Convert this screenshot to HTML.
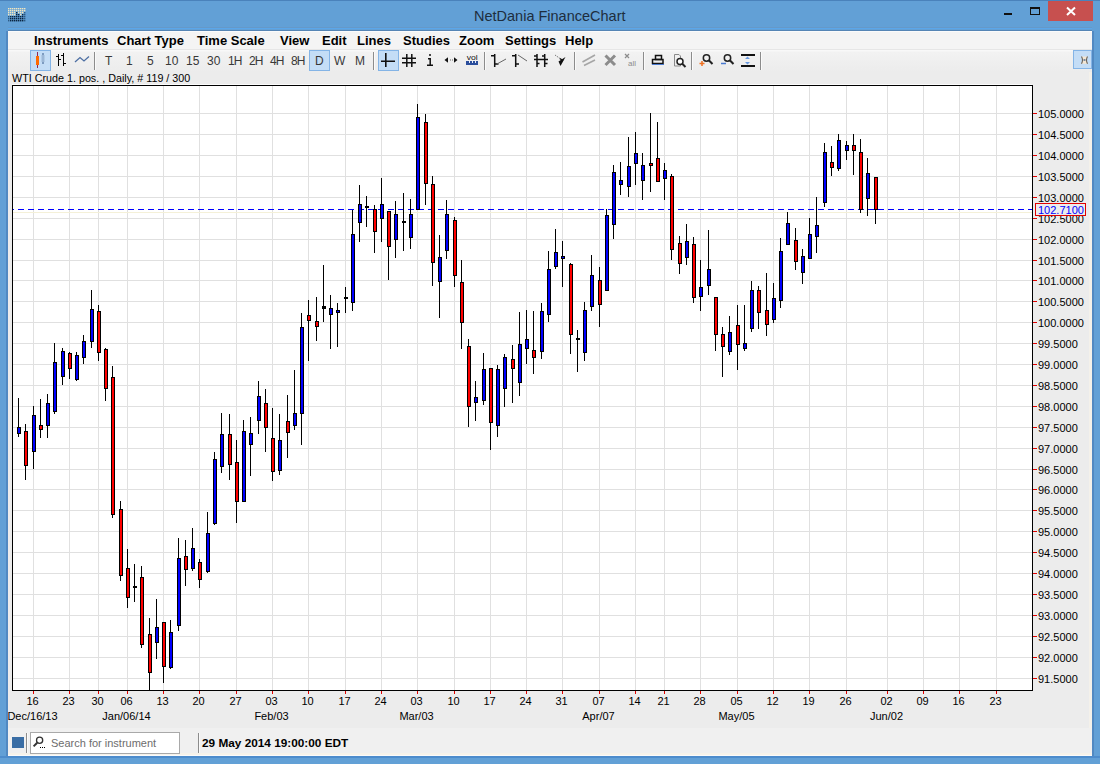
<!DOCTYPE html>
<html><head><meta charset="utf-8">
<style>
*{margin:0;padding:0;box-sizing:border-box}
html,body{width:1100px;height:764px;overflow:hidden;background:#62a0d6;font-family:"Liberation Sans",sans-serif}
.abs{position:absolute}
#client{position:absolute;left:8px;top:31px;width:1084px;height:725px;background:#ececec}
#menubar{position:absolute;left:8px;top:31px;width:1084px;height:19px;background:#f4f4f4;border-top:1px solid #fbfbfb;border-bottom:1px solid #e6e6e6}
.menu{position:absolute;top:33px;font-weight:bold;font-size:13px;color:#000;line-height:16px;white-space:nowrap}
.tb{position:absolute;top:54px;font-size:12px;color:#383838;line-height:14px;white-space:nowrap}
.sel{position:absolute;background:#c4ddf6;border:1px solid #84b4e6}
.sep{position:absolute;width:1px;background:#8c8c8c;box-shadow:1px 0 0 #fafafa}
svg text{font-family:"Liberation Sans",sans-serif}
.ax{font-size:11px;fill:#000}
</style></head><body>
<div id="client"></div>
<div id="menubar"></div>
<div class="abs" style="left:1089px;top:72px;width:3px;height:684px;background:#f4f1ea"></div>
<div class="abs" style="left:0;top:0;width:1100px;height:1px;background:#4a82bb"></div>
<div class="abs" style="left:8px;top:27px;width:1084px;height:1px;background:#6699c8"></div>
<div class="abs" style="left:8px;top:28px;width:1084px;height:1px;background:#5ba6e9"></div>
<div class="abs" style="left:8px;top:30px;width:1084px;height:1px;background:#5585b5"></div>
<div class="abs" style="left:8px;top:50px;width:1084px;height:22px;background:linear-gradient(#f8f8f8 0px,#f8f8f8 1px,#f2f2f2 2px,#ececec 22px)"></div>
<!-- title bar -->
<div class="abs" style="left:474px;top:8px;font-size:14.5px;color:#1e2e3e;white-space:nowrap;line-height:16px">NetDania FinanceChart</div>
<!-- window icon -->
<svg class="abs" style="left:0;top:0" width="40" height="30"><rect x="8" y="8" width="1.4" height="1.4" fill="#f2e6c0"/><rect x="10" y="8" width="1.4" height="1.4" fill="#f2e6c0"/><rect x="12" y="8" width="1.4" height="1.4" fill="#f2e6c0"/><rect x="14" y="8" width="1.4" height="1.4" fill="#f2e6c0"/><rect x="16" y="8" width="1.4" height="1.4" fill="#f2e6c0"/><rect x="18" y="8" width="1.4" height="1.4" fill="#f2e6c0"/><rect x="20" y="8" width="1.4" height="1.4" fill="#f2e6c0"/><rect x="22" y="8" width="1.4" height="1.4" fill="#f2e6c0"/><rect x="24" y="8" width="1.4" height="1.4" fill="#f2e6c0"/><rect x="8" y="10" width="1.4" height="1.4" fill="#f2e6c0"/><rect x="10" y="10" width="1.4" height="1.4" fill="#f2e6c0"/><rect x="12" y="10" width="1.4" height="1.4" fill="#f2e6c0"/><rect x="14" y="10" width="1.4" height="1.4" fill="#f2e6c0"/><rect x="16" y="10" width="1.4" height="1.4" fill="#f2e6c0"/><rect x="18" y="10" width="1.4" height="1.4" fill="#f2e6c0"/><rect x="20" y="10" width="1.4" height="1.4" fill="#f2e6c0"/><rect x="22" y="10" width="1.4" height="1.4" fill="#f2e6c0"/><rect x="24" y="10" width="1.4" height="1.4" fill="#f2e6c0"/><rect x="8" y="12" width="1.4" height="1.4" fill="#f2e6c0"/><rect x="10" y="12" width="1.4" height="1.4" fill="#f2e6c0"/><rect x="12" y="12" width="1.4" height="1.4" fill="#f2e6c0"/><rect x="14" y="12" width="1.4" height="1.4" fill="#f2e6c0"/><rect x="16" y="12" width="1.4" height="1.4" fill="#0b2440"/><rect x="18" y="12" width="1.4" height="1.4" fill="#f2e6c0"/><rect x="20" y="12" width="1.4" height="1.4" fill="#f2e6c0"/><rect x="22" y="12" width="1.4" height="1.4" fill="#f2e6c0"/><rect x="24" y="12" width="1.4" height="1.4" fill="#2d5a84"/><rect x="8" y="14" width="1.4" height="1.4" fill="#f2e6c0"/><rect x="10" y="14" width="1.4" height="1.4" fill="#f2e6c0"/><rect x="12" y="14" width="1.4" height="1.4" fill="#f2e6c0"/><rect x="14" y="14" width="1.4" height="1.4" fill="#f2e6c0"/><rect x="16" y="14" width="1.4" height="1.4" fill="#0b2440"/><rect x="18" y="14" width="1.4" height="1.4" fill="#0b2440"/><rect x="20" y="14" width="1.4" height="1.4" fill="#f2e6c0"/><rect x="22" y="14" width="1.4" height="1.4" fill="#0b2440"/><rect x="24" y="14" width="1.4" height="1.4" fill="#2d5a84"/><rect x="8" y="16" width="1.4" height="1.4" fill="#2d5a84"/><rect x="10" y="16" width="1.4" height="1.4" fill="#0b2440"/><rect x="12" y="16" width="1.4" height="1.4" fill="#0b2440"/><rect x="14" y="16" width="1.4" height="1.4" fill="#0b2440"/><rect x="16" y="16" width="1.4" height="1.4" fill="#0b2440"/><rect x="18" y="16" width="1.4" height="1.4" fill="#0b2440"/><rect x="20" y="16" width="1.4" height="1.4" fill="#0b2440"/><rect x="22" y="16" width="1.4" height="1.4" fill="#0b2440"/><rect x="24" y="16" width="1.4" height="1.4" fill="#2d5a84"/><rect x="8" y="18" width="1.4" height="1.4" fill="#2d5a84"/><rect x="10" y="18" width="1.4" height="1.4" fill="#0b2440"/><rect x="12" y="18" width="1.4" height="1.4" fill="#0b2440"/><rect x="14" y="18" width="1.4" height="1.4" fill="#0b2440"/><rect x="16" y="18" width="1.4" height="1.4" fill="#0b2440"/><rect x="18" y="18" width="1.4" height="1.4" fill="#0b2440"/><rect x="20" y="18" width="1.4" height="1.4" fill="#0b2440"/><rect x="22" y="18" width="1.4" height="1.4" fill="#0b2440"/><rect x="24" y="18" width="1.4" height="1.4" fill="#2d5a84"/><rect x="8" y="20" width="1.4" height="1.4" fill="#2d5a84"/><rect x="10" y="20" width="1.4" height="1.4" fill="#0b2440"/><rect x="12" y="20" width="1.4" height="1.4" fill="#0b2440"/><rect x="14" y="20" width="1.4" height="1.4" fill="#0b2440"/><rect x="16" y="20" width="1.4" height="1.4" fill="#0b2440"/><rect x="18" y="20" width="1.4" height="1.4" fill="#0b2440"/><rect x="20" y="20" width="1.4" height="1.4" fill="#0b2440"/><rect x="22" y="20" width="1.4" height="1.4" fill="#0b2440"/><rect x="24" y="20" width="1.4" height="1.4" fill="#2d5a84"/></svg>
<!-- window buttons -->
<div class="abs" style="left:1004px;top:13px;width:8px;height:2px;background:#111"></div>
<div class="abs" style="left:1030px;top:7px;width:10px;height:8px;border:1px solid #111;border-top-width:2px"></div>
<div class="abs" style="left:1048px;top:1px;width:45px;height:20px;background:#c7504f"></div>
<svg class="abs" style="left:1060px;top:0px" width="24" height="24" viewBox="0 0 24 24"><path d="M7 7.5L15 15M15 7.5L7 15" stroke="#fff" stroke-width="2"/></svg>

<!-- menu -->
<div class="menu" style="left:34px">Instruments</div>
<div class="menu" style="left:117px">Chart Type</div>
<div class="menu" style="left:197px">Time Scale</div>
<div class="menu" style="left:280px">View</div>
<div class="menu" style="left:322px">Edit</div>
<div class="menu" style="left:357px">Lines</div>
<div class="menu" style="left:403px">Studies</div>
<div class="menu" style="left:459px">Zoom</div>
<div class="menu" style="left:505px">Settings</div>
<div class="menu" style="left:565px">Help</div>

<!-- toolbar -->
<div class="sel" style="left:30px;top:50px;width:21px;height:21px"></div>
<div class="sel" style="left:309px;top:50px;width:21px;height:21px"></div>
<div class="sel" style="left:378px;top:50px;width:21px;height:21px"></div>
<div class="sel" style="left:1073px;top:50px;width:19px;height:19px"></div>
<div class="sep" style="left:94px;top:52px;height:18px"></div>
<div class="sep" style="left:373px;top:52px;height:18px"></div>
<div class="sep" style="left:484px;top:52px;height:18px"></div>
<div class="sep" style="left:574px;top:52px;height:18px"></div>
<div class="sep" style="left:643px;top:52px;height:18px"></div>
<div class="sep" style="left:691px;top:52px;height:18px"></div>
<div class="sep" style="left:760px;top:52px;height:18px"></div>

<div class="tb" style="left:105px">T</div>
<div class="tb" style="left:126px">1</div>
<div class="tb" style="left:147px">5</div>
<div class="tb" style="left:165px">10</div>
<div class="tb" style="left:186px">15</div>
<div class="tb" style="left:207px">30</div>
<div class="tb" style="left:228px;letter-spacing:-1px">1H</div>
<div class="tb" style="left:249px;letter-spacing:-1px">2H</div>
<div class="tb" style="left:270px;letter-spacing:-1px">4H</div>
<div class="tb" style="left:291px;letter-spacing:-1px">8H</div>
<div class="tb" style="left:315px">D</div>
<div class="tb" style="left:334px">W</div>
<div class="tb" style="left:355px">M</div>

<svg class="abs" style="left:0;top:0" width="1100" height="80" viewBox="0 0 1100 80">
<!-- candle icon -->
<rect x="37" y="52" width="1" height="16" fill="#8a2a5a"/>
<rect x="36" y="56" width="3" height="9" fill="#ff6a00"/>
<rect x="42" y="53" width="2" height="11" fill="#7d9bc0"/>
<rect x="41" y="55" width="4" height="7" fill="#a9c3e0" opacity="0.7"/>
<!-- OHLC icon -->
<g fill="#000" shape-rendering="crispEdges">
<rect x="58" y="54" width="1" height="12"/><rect x="56" y="56" width="2" height="1"/><rect x="59" y="59" width="2" height="1"/>
<rect x="63" y="53" width="1" height="13"/><rect x="61" y="55" width="2" height="1"/><rect x="64" y="63" width="2" height="1"/>
</g>
<!-- line icon -->
<path d="M75 62 L80 57.5 L84 61 L89 56.5" stroke="#4d6fa3" stroke-width="1.3" fill="none"/>
<!-- crosshair -->
<path d="M385.8 53 V67 M381 61.2 H395" stroke="#111" stroke-width="1.6" fill="none"/>
<!-- grid # -->
<path d="M406.8 54 V67 M411.8 54 V67 M402 58.2 H416 M402 62.8 H416" stroke="#111" stroke-width="1.5" fill="none"/>
<!-- i -->
<path d="M430 54 V56 M428 58.8 H430.2 V65 M427 65.2 H433" stroke="#111" stroke-width="1.5" fill="none"/>
<!-- arrows <-> -->
<path d="M444.5 60 L448 57.3 L448 62.7 Z M457.5 60 L454 57.3 L454 62.7 Z" fill="#111"/>
<rect x="450" y="59" width="1" height="2" fill="#aaa"/><rect x="452" y="59" width="1" height="2" fill="#aaa"/>
<!-- vol -->
<text x="466.8" y="59.8" font-size="7.2" fill="#111" font-family="Liberation Sans" textLength="11" lengthAdjust="spacingAndGlyphs">vol</text>
<rect x="466" y="61" width="12" height="4" fill="#2b4e9c"/>
<rect x="469" y="61" width="1" height="2" fill="#e8eef8"/><rect x="472" y="61" width="1" height="2" fill="#e8eef8"/><rect x="475" y="61" width="1" height="2" fill="#e8eef8"/>
<!-- line tools -->
<path d="M494.7 54 V67 M491 55.7 H494.7 M494.7 64 H498.5" stroke="#111" stroke-width="1.5" fill="none"/>
<path d="M497 64 L506 59" stroke="#666" stroke-width="1" fill="none"/>
<path d="M515.7 54 V67 M512 55.7 H515.7 M515.7 64 H519" stroke="#111" stroke-width="1.5" fill="none"/>
<path d="M518 55 L527 61" stroke="#666" stroke-width="1" fill="none"/>
<path d="M537 54 V67 M544.7 54 V67 M534 59.5 H548 M534 56 H537 M537 63.5 H539.5 M542 56 H544.7 M544.7 63.5 H547.5" stroke="#111" stroke-width="1.5" fill="none"/>
<path d="M555 55 L560 58.5" stroke="#777" stroke-width="1" stroke-dasharray="1.5,1" fill="none"/>
<path d="M560 58.5 L563 61" stroke="#111" stroke-width="1.5" fill="none"/>
<path d="M565.5 57 L560.5 66 L558.5 61.5 Z" fill="#111"/>
<!-- gray tools -->
<path d="M582.5 62 L595 55 M584 65.5 L595 60" stroke="#a6a6a6" stroke-width="1.6" fill="none"/>
<path d="M605.5 55.5 L615 65 M615 55.5 L605.5 65" stroke="#8c8c8c" stroke-width="3" fill="none"/>
<path d="M625 54 L629 58 M629 54 L625 58" stroke="#8c8c8c" stroke-width="1.2" fill="none"/>
<text x="628" y="66" font-size="8" fill="#8c8c8c" font-family="Liberation Sans">all</text>
<!-- printer -->
<g fill="none" stroke="#111" stroke-width="1.5">
<rect x="655.5" y="55.5" width="6" height="4"/>
<path d="M652.5 59.5 H663 V63.5 H652.5 Z"/>
</g>
<rect x="652" y="64" width="12" height="1" fill="#4a7ad0"/>
<!-- print preview -->
<path d="M674.5 54.5 H679 L680.5 56 V66 H674.5 Z" fill="none" stroke="#8a8a8a" stroke-width="1"/>
<circle cx="680" cy="61.5" r="3" fill="#fff" stroke="#222" stroke-width="1.5"/>
<path d="M682 63.5 L685.5 67" stroke="#222" stroke-width="2"/>
<!-- zoom in -->
<circle cx="706.5" cy="58" r="3.2" fill="none" stroke="#222" stroke-width="1.5"/>
<path d="M708.8 60.3 L712.5 64" stroke="#222" stroke-width="2"/>
<path d="M702 61 V66 M699.5 63.5 H704.5" stroke="#f07020" stroke-width="1.5"/>
<!-- zoom out -->
<circle cx="727.5" cy="58" r="3.2" fill="none" stroke="#222" stroke-width="1.5"/>
<path d="M729.8 60.3 L733.5 64" stroke="#222" stroke-width="2"/>
<path d="M721 63.5 H726" stroke="#4a7ad0" stroke-width="1.5"/>
<!-- fit -->
<rect x="741" y="54" width="14" height="2" fill="#111"/>
<rect x="741" y="65" width="14" height="2" fill="#111"/>
<path d="M745 59 L747.5 56.5 L750 59 Z M745 62 L747.5 64.5 L750 62 Z" fill="#6a9ae0"/>
<!-- right pin icon -->
<path d="M1081.5 56.5 Q1083.5 60 1081.5 63.8 L1087.5 63.8 Q1085.5 60 1087.5 56.5 Z" fill="#f3e6d3"/>
<path d="M1081.5 56.5 Q1083.5 60 1081.5 63.8 M1087.5 56.5 Q1085.5 60 1087.5 63.8" fill="none" stroke="#6b6257" stroke-width="1.1"/>
<rect x="1083.5" y="59" width="2" height="2" fill="#7a8aa0"/>
</svg>

<!-- chart title -->
<div class="abs" style="left:12px;top:72px;font-size:10.75px;line-height:13px;color:#000;white-space:nowrap">WTI Crude 1. pos. , Daily, # 119 / 300</div>

<svg class="abs" style="left:0;top:0" width="1100" height="764" viewBox="0 0 1100 764" shape-rendering="crispEdges">
<rect x="12" y="84" width="1020" height="1" fill="#fcfcfc"/>
<rect x="12" y="85" width="1020" height="605" fill="#ffffff"/>
<rect x="13" y="113" width="1019" height="1" fill="#e0e0e0"/>
<rect x="13" y="134" width="1019" height="1" fill="#e0e0e0"/>
<rect x="13" y="155" width="1019" height="1" fill="#e0e0e0"/>
<rect x="13" y="176" width="1019" height="1" fill="#e0e0e0"/>
<rect x="13" y="197" width="1019" height="1" fill="#e0e0e0"/>
<rect x="13" y="218" width="1019" height="1" fill="#e0e0e0"/>
<rect x="13" y="239" width="1019" height="1" fill="#e0e0e0"/>
<rect x="13" y="260" width="1019" height="1" fill="#e0e0e0"/>
<rect x="13" y="280" width="1019" height="1" fill="#e0e0e0"/>
<rect x="13" y="301" width="1019" height="1" fill="#e0e0e0"/>
<rect x="13" y="322" width="1019" height="1" fill="#e0e0e0"/>
<rect x="13" y="343" width="1019" height="1" fill="#e0e0e0"/>
<rect x="13" y="364" width="1019" height="1" fill="#e0e0e0"/>
<rect x="13" y="385" width="1019" height="1" fill="#e0e0e0"/>
<rect x="13" y="406" width="1019" height="1" fill="#e0e0e0"/>
<rect x="13" y="427" width="1019" height="1" fill="#e0e0e0"/>
<rect x="13" y="448" width="1019" height="1" fill="#e0e0e0"/>
<rect x="13" y="469" width="1019" height="1" fill="#e0e0e0"/>
<rect x="13" y="489" width="1019" height="1" fill="#e0e0e0"/>
<rect x="13" y="510" width="1019" height="1" fill="#e0e0e0"/>
<rect x="13" y="531" width="1019" height="1" fill="#e0e0e0"/>
<rect x="13" y="552" width="1019" height="1" fill="#e0e0e0"/>
<rect x="13" y="573" width="1019" height="1" fill="#e0e0e0"/>
<rect x="13" y="594" width="1019" height="1" fill="#e0e0e0"/>
<rect x="13" y="615" width="1019" height="1" fill="#e0e0e0"/>
<rect x="13" y="636" width="1019" height="1" fill="#e0e0e0"/>
<rect x="13" y="657" width="1019" height="1" fill="#e0e0e0"/>
<rect x="13" y="678" width="1019" height="1" fill="#e0e0e0"/>
<rect x="33" y="86" width="1" height="604" fill="#e0e0e0"/>
<rect x="69" y="86" width="1" height="604" fill="#e0e0e0"/>
<rect x="98" y="86" width="1" height="604" fill="#e0e0e0"/>
<rect x="127" y="86" width="1" height="604" fill="#e0e0e0"/>
<rect x="163" y="86" width="1" height="604" fill="#e0e0e0"/>
<rect x="199" y="86" width="1" height="604" fill="#e0e0e0"/>
<rect x="236" y="86" width="1" height="604" fill="#e0e0e0"/>
<rect x="272" y="86" width="1" height="604" fill="#e0e0e0"/>
<rect x="308" y="86" width="1" height="604" fill="#e0e0e0"/>
<rect x="345" y="86" width="1" height="604" fill="#e0e0e0"/>
<rect x="381" y="86" width="1" height="604" fill="#e0e0e0"/>
<rect x="417" y="86" width="1" height="604" fill="#e0e0e0"/>
<rect x="454" y="86" width="1" height="604" fill="#e0e0e0"/>
<rect x="490" y="86" width="1" height="604" fill="#e0e0e0"/>
<rect x="526" y="86" width="1" height="604" fill="#e0e0e0"/>
<rect x="562" y="86" width="1" height="604" fill="#e0e0e0"/>
<rect x="599" y="86" width="1" height="604" fill="#e0e0e0"/>
<rect x="635" y="86" width="1" height="604" fill="#e0e0e0"/>
<rect x="664" y="86" width="1" height="604" fill="#e0e0e0"/>
<rect x="700" y="86" width="1" height="604" fill="#e0e0e0"/>
<rect x="737" y="86" width="1" height="604" fill="#e0e0e0"/>
<rect x="773" y="86" width="1" height="604" fill="#e0e0e0"/>
<rect x="809" y="86" width="1" height="604" fill="#e0e0e0"/>
<rect x="846" y="86" width="1" height="604" fill="#e0e0e0"/>
<rect x="887" y="86" width="1" height="604" fill="#e0e0e0"/>
<rect x="923" y="86" width="1" height="604" fill="#e0e0e0"/>
<rect x="959" y="86" width="1" height="604" fill="#e0e0e0"/>
<rect x="996" y="86" width="1" height="604" fill="#e0e0e0"/>
<rect x="13" y="212" width="1019" height="1" fill="#f4f0d8"/>
<line x1="12" y1="209.5" x2="1032" y2="209.5" stroke="#0000ff" stroke-width="1" stroke-dasharray="6,4" stroke-dashoffset="4"/>
<rect x="18" y="398" width="1" height="39" fill="#000"/>
<rect x="17" y="427" width="4" height="7" fill="#000"/>
<rect x="18" y="428" width="2" height="5" fill="#0000ff"/>
<rect x="25" y="424" width="1" height="56" fill="#000"/>
<rect x="24" y="431" width="4" height="35" fill="#000"/>
<rect x="25" y="432" width="2" height="33" fill="#ff0000"/>
<rect x="33" y="406" width="1" height="63" fill="#000"/>
<rect x="32" y="415" width="4" height="37" fill="#000"/>
<rect x="33" y="416" width="2" height="35" fill="#0000ff"/>
<rect x="40" y="399" width="1" height="39" fill="#000"/>
<rect x="39" y="425" width="4" height="5" fill="#000"/>
<rect x="40" y="426" width="2" height="3" fill="#ff0000"/>
<rect x="47" y="394" width="1" height="44" fill="#000"/>
<rect x="46" y="403" width="4" height="23" fill="#000"/>
<rect x="47" y="404" width="2" height="21" fill="#0000ff"/>
<rect x="54" y="343" width="1" height="71" fill="#000"/>
<rect x="53" y="362" width="4" height="50" fill="#000"/>
<rect x="54" y="363" width="2" height="48" fill="#0000ff"/>
<rect x="62" y="348" width="1" height="37" fill="#000"/>
<rect x="61" y="351" width="4" height="26" fill="#000"/>
<rect x="62" y="352" width="2" height="24" fill="#0000ff"/>
<rect x="69" y="352" width="1" height="27" fill="#000"/>
<rect x="68" y="353" width="4" height="16" fill="#000"/>
<rect x="69" y="354" width="2" height="14" fill="#ff0000"/>
<rect x="76" y="352" width="1" height="29" fill="#000"/>
<rect x="75" y="355" width="4" height="25" fill="#000"/>
<rect x="76" y="356" width="2" height="23" fill="#0000ff"/>
<rect x="83" y="335" width="1" height="29" fill="#000"/>
<rect x="82" y="341" width="4" height="17" fill="#000"/>
<rect x="83" y="342" width="2" height="15" fill="#0000ff"/>
<rect x="91" y="290" width="1" height="58" fill="#000"/>
<rect x="90" y="309" width="4" height="33" fill="#000"/>
<rect x="91" y="310" width="2" height="31" fill="#0000ff"/>
<rect x="98" y="305" width="1" height="56" fill="#000"/>
<rect x="97" y="311" width="4" height="42" fill="#000"/>
<rect x="98" y="312" width="2" height="40" fill="#ff0000"/>
<rect x="105" y="348" width="1" height="53" fill="#000"/>
<rect x="104" y="349" width="4" height="40" fill="#000"/>
<rect x="105" y="350" width="2" height="38" fill="#ff0000"/>
<rect x="112" y="366" width="1" height="152" fill="#000"/>
<rect x="111" y="377" width="4" height="138" fill="#000"/>
<rect x="112" y="378" width="2" height="136" fill="#ff0000"/>
<rect x="120" y="501" width="1" height="80" fill="#000"/>
<rect x="119" y="509" width="4" height="67" fill="#000"/>
<rect x="120" y="510" width="2" height="65" fill="#ff0000"/>
<rect x="127" y="549" width="1" height="59" fill="#000"/>
<rect x="126" y="568" width="4" height="30" fill="#000"/>
<rect x="127" y="569" width="2" height="28" fill="#ff0000"/>
<rect x="134" y="564" width="1" height="38" fill="#000"/>
<rect x="133" y="586" width="4" height="2" fill="#000"/>
<rect x="141" y="566" width="1" height="82" fill="#000"/>
<rect x="140" y="577" width="4" height="68" fill="#000"/>
<rect x="141" y="578" width="2" height="66" fill="#ff0000"/>
<rect x="149" y="618" width="1" height="72" fill="#000"/>
<rect x="148" y="634" width="4" height="39" fill="#000"/>
<rect x="149" y="635" width="2" height="37" fill="#ff0000"/>
<rect x="156" y="599" width="1" height="60" fill="#000"/>
<rect x="155" y="627" width="4" height="16" fill="#000"/>
<rect x="156" y="628" width="2" height="14" fill="#0000ff"/>
<rect x="163" y="622" width="1" height="61" fill="#000"/>
<rect x="162" y="622" width="4" height="45" fill="#000"/>
<rect x="163" y="623" width="2" height="43" fill="#ff0000"/>
<rect x="170" y="620" width="1" height="49" fill="#000"/>
<rect x="169" y="632" width="4" height="36" fill="#000"/>
<rect x="170" y="633" width="2" height="34" fill="#0000ff"/>
<rect x="178" y="538" width="1" height="93" fill="#000"/>
<rect x="177" y="558" width="4" height="68" fill="#000"/>
<rect x="178" y="559" width="2" height="66" fill="#0000ff"/>
<rect x="185" y="540" width="1" height="46" fill="#000"/>
<rect x="184" y="556" width="4" height="14" fill="#000"/>
<rect x="185" y="557" width="2" height="12" fill="#ff0000"/>
<rect x="192" y="528" width="1" height="43" fill="#000"/>
<rect x="191" y="548" width="4" height="21" fill="#000"/>
<rect x="192" y="549" width="2" height="19" fill="#0000ff"/>
<rect x="199" y="559" width="1" height="29" fill="#000"/>
<rect x="198" y="562" width="4" height="18" fill="#000"/>
<rect x="199" y="563" width="2" height="16" fill="#ff0000"/>
<rect x="207" y="512" width="1" height="61" fill="#000"/>
<rect x="206" y="533" width="4" height="39" fill="#000"/>
<rect x="207" y="534" width="2" height="37" fill="#0000ff"/>
<rect x="214" y="452" width="1" height="73" fill="#000"/>
<rect x="213" y="459" width="4" height="65" fill="#000"/>
<rect x="214" y="460" width="2" height="63" fill="#0000ff"/>
<rect x="221" y="413" width="1" height="60" fill="#000"/>
<rect x="220" y="434" width="4" height="33" fill="#000"/>
<rect x="221" y="435" width="2" height="31" fill="#0000ff"/>
<rect x="229" y="414" width="1" height="66" fill="#000"/>
<rect x="228" y="434" width="4" height="31" fill="#000"/>
<rect x="229" y="435" width="2" height="29" fill="#ff0000"/>
<rect x="236" y="440" width="1" height="83" fill="#000"/>
<rect x="235" y="462" width="4" height="40" fill="#000"/>
<rect x="236" y="463" width="2" height="38" fill="#ff0000"/>
<rect x="243" y="420" width="1" height="82" fill="#000"/>
<rect x="242" y="431" width="4" height="71" fill="#000"/>
<rect x="243" y="432" width="2" height="69" fill="#0000ff"/>
<rect x="250" y="417" width="1" height="59" fill="#000"/>
<rect x="249" y="433" width="4" height="12" fill="#000"/>
<rect x="250" y="434" width="2" height="10" fill="#0000ff"/>
<rect x="258" y="381" width="1" height="53" fill="#000"/>
<rect x="257" y="396" width="4" height="25" fill="#000"/>
<rect x="258" y="397" width="2" height="23" fill="#0000ff"/>
<rect x="265" y="389" width="1" height="63" fill="#000"/>
<rect x="264" y="403" width="4" height="25" fill="#000"/>
<rect x="265" y="404" width="2" height="23" fill="#ff0000"/>
<rect x="272" y="408" width="1" height="73" fill="#000"/>
<rect x="271" y="438" width="4" height="34" fill="#000"/>
<rect x="272" y="439" width="2" height="32" fill="#ff0000"/>
<rect x="279" y="414" width="1" height="61" fill="#000"/>
<rect x="278" y="440" width="4" height="31" fill="#000"/>
<rect x="279" y="441" width="2" height="29" fill="#0000ff"/>
<rect x="287" y="395" width="1" height="63" fill="#000"/>
<rect x="286" y="421" width="4" height="12" fill="#000"/>
<rect x="287" y="422" width="2" height="10" fill="#ff0000"/>
<rect x="294" y="370" width="1" height="60" fill="#000"/>
<rect x="293" y="413" width="4" height="13" fill="#000"/>
<rect x="294" y="414" width="2" height="11" fill="#0000ff"/>
<rect x="301" y="313" width="1" height="132" fill="#000"/>
<rect x="300" y="327" width="4" height="87" fill="#000"/>
<rect x="301" y="328" width="2" height="85" fill="#0000ff"/>
<rect x="308" y="300" width="1" height="61" fill="#000"/>
<rect x="307" y="315" width="4" height="6" fill="#000"/>
<rect x="308" y="316" width="2" height="4" fill="#ff0000"/>
<rect x="316" y="297" width="1" height="44" fill="#000"/>
<rect x="315" y="321" width="4" height="6" fill="#000"/>
<rect x="316" y="322" width="2" height="4" fill="#ff0000"/>
<rect x="323" y="265" width="1" height="57" fill="#000"/>
<rect x="322" y="306" width="4" height="3" fill="#000"/>
<rect x="330" y="295" width="1" height="54" fill="#000"/>
<rect x="329" y="308" width="4" height="7" fill="#000"/>
<rect x="330" y="309" width="2" height="5" fill="#0000ff"/>
<rect x="337" y="303" width="1" height="44" fill="#000"/>
<rect x="336" y="310" width="4" height="3" fill="#000"/>
<rect x="337" y="311" width="2" height="1" fill="#0000ff"/>
<rect x="345" y="287" width="1" height="26" fill="#000"/>
<rect x="344" y="297" width="4" height="2" fill="#000"/>
<rect x="352" y="210" width="1" height="101" fill="#000"/>
<rect x="351" y="234" width="4" height="69" fill="#000"/>
<rect x="352" y="235" width="2" height="67" fill="#0000ff"/>
<rect x="359" y="185" width="1" height="57" fill="#000"/>
<rect x="358" y="204" width="4" height="19" fill="#000"/>
<rect x="359" y="205" width="2" height="17" fill="#0000ff"/>
<rect x="366" y="196" width="1" height="31" fill="#000"/>
<rect x="365" y="206" width="4" height="2" fill="#000"/>
<rect x="374" y="205" width="1" height="48" fill="#000"/>
<rect x="373" y="209" width="4" height="23" fill="#000"/>
<rect x="374" y="210" width="2" height="21" fill="#ff0000"/>
<rect x="381" y="178" width="1" height="64" fill="#000"/>
<rect x="380" y="204" width="4" height="15" fill="#000"/>
<rect x="381" y="205" width="2" height="13" fill="#0000ff"/>
<rect x="388" y="211" width="1" height="69" fill="#000"/>
<rect x="387" y="211" width="4" height="36" fill="#000"/>
<rect x="388" y="212" width="2" height="34" fill="#ff0000"/>
<rect x="395" y="201" width="1" height="57" fill="#000"/>
<rect x="394" y="214" width="4" height="26" fill="#000"/>
<rect x="395" y="215" width="2" height="24" fill="#0000ff"/>
<rect x="403" y="193" width="1" height="58" fill="#000"/>
<rect x="402" y="221" width="4" height="2" fill="#000"/>
<rect x="410" y="199" width="1" height="50" fill="#000"/>
<rect x="409" y="214" width="4" height="24" fill="#000"/>
<rect x="410" y="215" width="2" height="22" fill="#0000ff"/>
<rect x="417" y="104" width="1" height="106" fill="#000"/>
<rect x="416" y="117" width="4" height="93" fill="#000"/>
<rect x="417" y="118" width="2" height="91" fill="#0000ff"/>
<rect x="425" y="114" width="1" height="91" fill="#000"/>
<rect x="424" y="122" width="4" height="62" fill="#000"/>
<rect x="425" y="123" width="2" height="60" fill="#ff0000"/>
<rect x="432" y="176" width="1" height="110" fill="#000"/>
<rect x="431" y="184" width="4" height="79" fill="#000"/>
<rect x="432" y="185" width="2" height="77" fill="#ff0000"/>
<rect x="439" y="235" width="1" height="83" fill="#000"/>
<rect x="438" y="257" width="4" height="25" fill="#000"/>
<rect x="439" y="258" width="2" height="23" fill="#0000ff"/>
<rect x="446" y="200" width="1" height="59" fill="#000"/>
<rect x="445" y="214" width="4" height="37" fill="#000"/>
<rect x="446" y="215" width="2" height="35" fill="#0000ff"/>
<rect x="454" y="217" width="1" height="70" fill="#000"/>
<rect x="453" y="220" width="4" height="56" fill="#000"/>
<rect x="454" y="221" width="2" height="54" fill="#ff0000"/>
<rect x="461" y="260" width="1" height="89" fill="#000"/>
<rect x="460" y="282" width="4" height="41" fill="#000"/>
<rect x="461" y="283" width="2" height="39" fill="#ff0000"/>
<rect x="468" y="339" width="1" height="88" fill="#000"/>
<rect x="467" y="346" width="4" height="61" fill="#000"/>
<rect x="468" y="347" width="2" height="59" fill="#ff0000"/>
<rect x="475" y="381" width="1" height="40" fill="#000"/>
<rect x="474" y="397" width="4" height="6" fill="#000"/>
<rect x="475" y="398" width="2" height="4" fill="#0000ff"/>
<rect x="483" y="353" width="1" height="52" fill="#000"/>
<rect x="482" y="369" width="4" height="32" fill="#000"/>
<rect x="483" y="370" width="2" height="30" fill="#0000ff"/>
<rect x="490" y="368" width="1" height="82" fill="#000"/>
<rect x="489" y="368" width="4" height="55" fill="#000"/>
<rect x="490" y="369" width="2" height="53" fill="#ff0000"/>
<rect x="497" y="365" width="1" height="72" fill="#000"/>
<rect x="496" y="369" width="4" height="57" fill="#000"/>
<rect x="497" y="370" width="2" height="55" fill="#0000ff"/>
<rect x="504" y="354" width="1" height="53" fill="#000"/>
<rect x="503" y="357" width="4" height="32" fill="#000"/>
<rect x="504" y="358" width="2" height="30" fill="#0000ff"/>
<rect x="512" y="345" width="1" height="58" fill="#000"/>
<rect x="511" y="359" width="4" height="10" fill="#000"/>
<rect x="512" y="360" width="2" height="8" fill="#ff0000"/>
<rect x="519" y="312" width="1" height="84" fill="#000"/>
<rect x="518" y="344" width="4" height="39" fill="#000"/>
<rect x="519" y="345" width="2" height="37" fill="#0000ff"/>
<rect x="526" y="310" width="1" height="54" fill="#000"/>
<rect x="525" y="339" width="4" height="10" fill="#000"/>
<rect x="526" y="340" width="2" height="8" fill="#0000ff"/>
<rect x="533" y="311" width="1" height="63" fill="#000"/>
<rect x="532" y="350" width="4" height="8" fill="#000"/>
<rect x="533" y="351" width="2" height="6" fill="#ff0000"/>
<rect x="541" y="303" width="1" height="56" fill="#000"/>
<rect x="540" y="311" width="4" height="41" fill="#000"/>
<rect x="541" y="312" width="2" height="39" fill="#0000ff"/>
<rect x="548" y="251" width="1" height="71" fill="#000"/>
<rect x="547" y="269" width="4" height="46" fill="#000"/>
<rect x="548" y="270" width="2" height="44" fill="#0000ff"/>
<rect x="555" y="229" width="1" height="40" fill="#000"/>
<rect x="554" y="252" width="4" height="15" fill="#000"/>
<rect x="555" y="253" width="2" height="13" fill="#0000ff"/>
<rect x="562" y="241" width="1" height="46" fill="#000"/>
<rect x="561" y="256" width="4" height="3" fill="#000"/>
<rect x="562" y="257" width="2" height="1" fill="#0000ff"/>
<rect x="570" y="263" width="1" height="91" fill="#000"/>
<rect x="569" y="264" width="4" height="71" fill="#000"/>
<rect x="570" y="265" width="2" height="69" fill="#ff0000"/>
<rect x="577" y="330" width="1" height="42" fill="#000"/>
<rect x="576" y="338" width="4" height="2" fill="#000"/>
<rect x="584" y="302" width="1" height="59" fill="#000"/>
<rect x="583" y="310" width="4" height="43" fill="#000"/>
<rect x="584" y="311" width="2" height="41" fill="#0000ff"/>
<rect x="591" y="255" width="1" height="56" fill="#000"/>
<rect x="590" y="275" width="4" height="32" fill="#000"/>
<rect x="591" y="276" width="2" height="30" fill="#0000ff"/>
<rect x="599" y="267" width="1" height="60" fill="#000"/>
<rect x="598" y="280" width="4" height="25" fill="#000"/>
<rect x="599" y="281" width="2" height="23" fill="#ff0000"/>
<rect x="606" y="209" width="1" height="82" fill="#000"/>
<rect x="605" y="215" width="4" height="76" fill="#000"/>
<rect x="606" y="216" width="2" height="74" fill="#0000ff"/>
<rect x="613" y="165" width="1" height="74" fill="#000"/>
<rect x="612" y="172" width="4" height="53" fill="#000"/>
<rect x="613" y="173" width="2" height="51" fill="#0000ff"/>
<rect x="620" y="162" width="1" height="33" fill="#000"/>
<rect x="619" y="180" width="4" height="5" fill="#000"/>
<rect x="620" y="181" width="2" height="3" fill="#0000ff"/>
<rect x="628" y="137" width="1" height="60" fill="#000"/>
<rect x="627" y="166" width="4" height="21" fill="#000"/>
<rect x="628" y="167" width="2" height="19" fill="#0000ff"/>
<rect x="635" y="132" width="1" height="53" fill="#000"/>
<rect x="634" y="153" width="4" height="11" fill="#000"/>
<rect x="635" y="154" width="2" height="9" fill="#0000ff"/>
<rect x="642" y="153" width="1" height="47" fill="#000"/>
<rect x="641" y="165" width="4" height="16" fill="#000"/>
<rect x="642" y="166" width="2" height="14" fill="#0000ff"/>
<rect x="650" y="113" width="1" height="79" fill="#000"/>
<rect x="649" y="163" width="4" height="3" fill="#000"/>
<rect x="650" y="164" width="2" height="1" fill="#ff0000"/>
<rect x="657" y="122" width="1" height="60" fill="#000"/>
<rect x="656" y="158" width="4" height="24" fill="#000"/>
<rect x="657" y="159" width="2" height="22" fill="#ff0000"/>
<rect x="664" y="163" width="1" height="37" fill="#000"/>
<rect x="663" y="170" width="4" height="9" fill="#000"/>
<rect x="664" y="171" width="2" height="7" fill="#0000ff"/>
<rect x="671" y="174" width="1" height="86" fill="#000"/>
<rect x="670" y="176" width="4" height="74" fill="#000"/>
<rect x="671" y="177" width="2" height="72" fill="#ff0000"/>
<rect x="679" y="236" width="1" height="38" fill="#000"/>
<rect x="678" y="243" width="4" height="21" fill="#000"/>
<rect x="679" y="244" width="2" height="19" fill="#ff0000"/>
<rect x="686" y="224" width="1" height="41" fill="#000"/>
<rect x="685" y="241" width="4" height="17" fill="#000"/>
<rect x="686" y="242" width="2" height="15" fill="#0000ff"/>
<rect x="693" y="237" width="1" height="66" fill="#000"/>
<rect x="692" y="244" width="4" height="54" fill="#000"/>
<rect x="693" y="245" width="2" height="52" fill="#ff0000"/>
<rect x="700" y="260" width="1" height="51" fill="#000"/>
<rect x="699" y="287" width="4" height="10" fill="#000"/>
<rect x="700" y="288" width="2" height="8" fill="#0000ff"/>
<rect x="708" y="230" width="1" height="65" fill="#000"/>
<rect x="707" y="269" width="4" height="17" fill="#000"/>
<rect x="708" y="270" width="2" height="15" fill="#0000ff"/>
<rect x="715" y="297" width="1" height="54" fill="#000"/>
<rect x="714" y="297" width="4" height="38" fill="#000"/>
<rect x="715" y="298" width="2" height="36" fill="#ff0000"/>
<rect x="722" y="327" width="1" height="50" fill="#000"/>
<rect x="721" y="334" width="4" height="13" fill="#000"/>
<rect x="722" y="335" width="2" height="11" fill="#ff0000"/>
<rect x="729" y="316" width="1" height="39" fill="#000"/>
<rect x="728" y="332" width="4" height="20" fill="#000"/>
<rect x="729" y="333" width="2" height="18" fill="#0000ff"/>
<rect x="737" y="305" width="1" height="65" fill="#000"/>
<rect x="736" y="325" width="4" height="20" fill="#000"/>
<rect x="737" y="326" width="2" height="18" fill="#ff0000"/>
<rect x="744" y="305" width="1" height="46" fill="#000"/>
<rect x="743" y="343" width="4" height="6" fill="#000"/>
<rect x="744" y="344" width="2" height="4" fill="#0000ff"/>
<rect x="751" y="281" width="1" height="51" fill="#000"/>
<rect x="750" y="290" width="4" height="39" fill="#000"/>
<rect x="751" y="291" width="2" height="37" fill="#0000ff"/>
<rect x="758" y="286" width="1" height="43" fill="#000"/>
<rect x="757" y="290" width="4" height="23" fill="#000"/>
<rect x="758" y="291" width="2" height="21" fill="#ff0000"/>
<rect x="766" y="273" width="1" height="63" fill="#000"/>
<rect x="765" y="310" width="4" height="15" fill="#000"/>
<rect x="766" y="311" width="2" height="13" fill="#ff0000"/>
<rect x="773" y="283" width="1" height="40" fill="#000"/>
<rect x="772" y="298" width="4" height="22" fill="#000"/>
<rect x="773" y="299" width="2" height="20" fill="#0000ff"/>
<rect x="780" y="238" width="1" height="70" fill="#000"/>
<rect x="779" y="251" width="4" height="50" fill="#000"/>
<rect x="780" y="252" width="2" height="48" fill="#0000ff"/>
<rect x="787" y="212" width="1" height="33" fill="#000"/>
<rect x="786" y="223" width="4" height="22" fill="#000"/>
<rect x="787" y="224" width="2" height="20" fill="#0000ff"/>
<rect x="795" y="228" width="1" height="42" fill="#000"/>
<rect x="794" y="240" width="4" height="22" fill="#000"/>
<rect x="795" y="241" width="2" height="20" fill="#ff0000"/>
<rect x="802" y="249" width="1" height="35" fill="#000"/>
<rect x="801" y="256" width="4" height="17" fill="#000"/>
<rect x="802" y="257" width="2" height="15" fill="#0000ff"/>
<rect x="809" y="218" width="1" height="41" fill="#000"/>
<rect x="808" y="234" width="4" height="25" fill="#000"/>
<rect x="809" y="235" width="2" height="23" fill="#0000ff"/>
<rect x="816" y="197" width="1" height="56" fill="#000"/>
<rect x="815" y="225" width="4" height="12" fill="#000"/>
<rect x="816" y="226" width="2" height="10" fill="#0000ff"/>
<rect x="824" y="143" width="1" height="64" fill="#000"/>
<rect x="823" y="152" width="4" height="51" fill="#000"/>
<rect x="824" y="153" width="2" height="49" fill="#0000ff"/>
<rect x="831" y="146" width="1" height="30" fill="#000"/>
<rect x="830" y="162" width="4" height="6" fill="#000"/>
<rect x="831" y="163" width="2" height="4" fill="#ff0000"/>
<rect x="838" y="134" width="1" height="37" fill="#000"/>
<rect x="837" y="140" width="4" height="29" fill="#000"/>
<rect x="838" y="141" width="2" height="27" fill="#0000ff"/>
<rect x="846" y="141" width="1" height="19" fill="#000"/>
<rect x="845" y="145" width="4" height="6" fill="#000"/>
<rect x="846" y="146" width="2" height="4" fill="#0000ff"/>
<rect x="853" y="134" width="1" height="41" fill="#000"/>
<rect x="852" y="145" width="4" height="6" fill="#000"/>
<rect x="853" y="146" width="2" height="4" fill="#ff0000"/>
<rect x="860" y="139" width="1" height="74" fill="#000"/>
<rect x="859" y="152" width="4" height="58" fill="#000"/>
<rect x="860" y="153" width="2" height="56" fill="#ff0000"/>
<rect x="867" y="158" width="1" height="58" fill="#000"/>
<rect x="866" y="173" width="4" height="26" fill="#000"/>
<rect x="867" y="174" width="2" height="24" fill="#0000ff"/>
<rect x="875" y="177" width="1" height="47" fill="#000"/>
<rect x="874" y="177" width="4" height="33" fill="#000"/>
<rect x="875" y="178" width="2" height="31" fill="#ff0000"/>
<rect x="12" y="85" width="1021" height="1" fill="#000"/>
<rect x="12" y="690" width="1021" height="1" fill="#000"/>
<rect x="12" y="85" width="1" height="606" fill="#000"/>
<rect x="1032" y="85" width="1" height="606" fill="#000"/>
<rect x="1033" y="113" width="4" height="1" fill="#e00000"/>
<text x="1038" y="117.5" class="ax">105.0000</text>
<rect x="1033" y="134" width="4" height="1" fill="#e00000"/>
<text x="1038" y="138.5" class="ax">104.5000</text>
<rect x="1033" y="155" width="4" height="1" fill="#e00000"/>
<text x="1038" y="159.5" class="ax">104.0000</text>
<rect x="1033" y="176" width="4" height="1" fill="#e00000"/>
<text x="1038" y="180.5" class="ax">103.5000</text>
<rect x="1033" y="197" width="4" height="1" fill="#e00000"/>
<text x="1038" y="201.5" class="ax">103.0000</text>
<rect x="1033" y="218" width="4" height="1" fill="#e00000"/>
<text x="1038" y="222.5" class="ax">102.5000</text>
<rect x="1033" y="239" width="4" height="1" fill="#e00000"/>
<text x="1038" y="243.5" class="ax">102.0000</text>
<rect x="1033" y="260" width="4" height="1" fill="#e00000"/>
<text x="1038" y="264.5" class="ax">101.5000</text>
<rect x="1033" y="280" width="4" height="1" fill="#e00000"/>
<text x="1038" y="284.5" class="ax">101.0000</text>
<rect x="1033" y="301" width="4" height="1" fill="#e00000"/>
<text x="1038" y="305.5" class="ax">100.5000</text>
<rect x="1033" y="322" width="4" height="1" fill="#e00000"/>
<text x="1038" y="326.5" class="ax">100.0000</text>
<rect x="1033" y="343" width="4" height="1" fill="#e00000"/>
<text x="1038" y="347.5" class="ax">99.5000</text>
<rect x="1033" y="364" width="4" height="1" fill="#e00000"/>
<text x="1038" y="368.5" class="ax">99.0000</text>
<rect x="1033" y="385" width="4" height="1" fill="#e00000"/>
<text x="1038" y="389.5" class="ax">98.5000</text>
<rect x="1033" y="406" width="4" height="1" fill="#e00000"/>
<text x="1038" y="410.5" class="ax">98.0000</text>
<rect x="1033" y="427" width="4" height="1" fill="#e00000"/>
<text x="1038" y="431.5" class="ax">97.5000</text>
<rect x="1033" y="448" width="4" height="1" fill="#e00000"/>
<text x="1038" y="452.5" class="ax">97.0000</text>
<rect x="1033" y="469" width="4" height="1" fill="#e00000"/>
<text x="1038" y="473.5" class="ax">96.5000</text>
<rect x="1033" y="489" width="4" height="1" fill="#e00000"/>
<text x="1038" y="493.5" class="ax">96.0000</text>
<rect x="1033" y="510" width="4" height="1" fill="#e00000"/>
<text x="1038" y="514.5" class="ax">95.5000</text>
<rect x="1033" y="531" width="4" height="1" fill="#e00000"/>
<text x="1038" y="535.5" class="ax">95.0000</text>
<rect x="1033" y="552" width="4" height="1" fill="#e00000"/>
<text x="1038" y="556.5" class="ax">94.5000</text>
<rect x="1033" y="573" width="4" height="1" fill="#e00000"/>
<text x="1038" y="577.5" class="ax">94.0000</text>
<rect x="1033" y="594" width="4" height="1" fill="#e00000"/>
<text x="1038" y="598.5" class="ax">93.5000</text>
<rect x="1033" y="615" width="4" height="1" fill="#e00000"/>
<text x="1038" y="619.5" class="ax">93.0000</text>
<rect x="1033" y="636" width="4" height="1" fill="#e00000"/>
<text x="1038" y="640.5" class="ax">92.5000</text>
<rect x="1033" y="657" width="4" height="1" fill="#e00000"/>
<text x="1038" y="661.5" class="ax">92.0000</text>
<rect x="1033" y="678" width="4" height="1" fill="#e00000"/>
<text x="1038" y="682.5" class="ax">91.5000</text>
<rect x="1035.5" y="203.5" width="50" height="12" fill="none" stroke="#e00000" stroke-width="1"/>
<text x="1038" y="213.5" class="ax" style="fill:#0000ff">102.7100</text>
<rect x="33" y="691" width="1" height="3" fill="#e00000"/>
<text x="32.5" y="705" class="ax" text-anchor="middle">16</text>
<rect x="69" y="691" width="1" height="3" fill="#e00000"/>
<text x="68.5" y="705" class="ax" text-anchor="middle">23</text>
<rect x="98" y="691" width="1" height="3" fill="#e00000"/>
<text x="97.5" y="705" class="ax" text-anchor="middle">30</text>
<rect x="127" y="691" width="1" height="3" fill="#e00000"/>
<text x="126.5" y="705" class="ax" text-anchor="middle">06</text>
<rect x="163" y="691" width="1" height="3" fill="#e00000"/>
<text x="162.5" y="705" class="ax" text-anchor="middle">13</text>
<rect x="199" y="691" width="1" height="3" fill="#e00000"/>
<text x="198.5" y="705" class="ax" text-anchor="middle">20</text>
<rect x="236" y="691" width="1" height="3" fill="#e00000"/>
<text x="235.5" y="705" class="ax" text-anchor="middle">27</text>
<rect x="272" y="691" width="1" height="3" fill="#e00000"/>
<text x="271.5" y="705" class="ax" text-anchor="middle">03</text>
<rect x="308" y="691" width="1" height="3" fill="#e00000"/>
<text x="307.5" y="705" class="ax" text-anchor="middle">10</text>
<rect x="345" y="691" width="1" height="3" fill="#e00000"/>
<text x="344.5" y="705" class="ax" text-anchor="middle">17</text>
<rect x="381" y="691" width="1" height="3" fill="#e00000"/>
<text x="380.5" y="705" class="ax" text-anchor="middle">24</text>
<rect x="417" y="691" width="1" height="3" fill="#e00000"/>
<text x="416.5" y="705" class="ax" text-anchor="middle">03</text>
<rect x="454" y="691" width="1" height="3" fill="#e00000"/>
<text x="453.5" y="705" class="ax" text-anchor="middle">10</text>
<rect x="490" y="691" width="1" height="3" fill="#e00000"/>
<text x="489.5" y="705" class="ax" text-anchor="middle">17</text>
<rect x="526" y="691" width="1" height="3" fill="#e00000"/>
<text x="525.5" y="705" class="ax" text-anchor="middle">24</text>
<rect x="562" y="691" width="1" height="3" fill="#e00000"/>
<text x="561.5" y="705" class="ax" text-anchor="middle">31</text>
<rect x="599" y="691" width="1" height="3" fill="#e00000"/>
<text x="598.5" y="705" class="ax" text-anchor="middle">07</text>
<rect x="635" y="691" width="1" height="3" fill="#e00000"/>
<text x="634.5" y="705" class="ax" text-anchor="middle">14</text>
<rect x="664" y="691" width="1" height="3" fill="#e00000"/>
<text x="663.5" y="705" class="ax" text-anchor="middle">21</text>
<rect x="700" y="691" width="1" height="3" fill="#e00000"/>
<text x="699.5" y="705" class="ax" text-anchor="middle">28</text>
<rect x="737" y="691" width="1" height="3" fill="#e00000"/>
<text x="736.5" y="705" class="ax" text-anchor="middle">05</text>
<rect x="773" y="691" width="1" height="3" fill="#e00000"/>
<text x="772.5" y="705" class="ax" text-anchor="middle">12</text>
<rect x="809" y="691" width="1" height="3" fill="#e00000"/>
<text x="808.5" y="705" class="ax" text-anchor="middle">19</text>
<rect x="846" y="691" width="1" height="3" fill="#e00000"/>
<text x="845.5" y="705" class="ax" text-anchor="middle">26</text>
<rect x="887" y="691" width="1" height="3" fill="#e00000"/>
<text x="886.5" y="705" class="ax" text-anchor="middle">02</text>
<rect x="923" y="691" width="1" height="3" fill="#e00000"/>
<text x="922.5" y="705" class="ax" text-anchor="middle">09</text>
<rect x="959" y="691" width="1" height="3" fill="#e00000"/>
<text x="958.5" y="705" class="ax" text-anchor="middle">16</text>
<rect x="996" y="691" width="1" height="3" fill="#e00000"/>
<text x="995.5" y="705" class="ax" text-anchor="middle">23</text>
<text x="32.5" y="720" class="ax" text-anchor="middle">Dec/16/13</text>
<text x="126.5" y="720" class="ax" text-anchor="middle">Jan/06/14</text>
<text x="271.5" y="720" class="ax" text-anchor="middle">Feb/03</text>
<text x="416.5" y="720" class="ax" text-anchor="middle">Mar/03</text>
<text x="598.5" y="720" class="ax" text-anchor="middle">Apr/07</text>
<text x="736.5" y="720" class="ax" text-anchor="middle">May/05</text>
<text x="886.5" y="720" class="ax" text-anchor="middle">Jun/02</text>
</svg>

<!-- status bar -->
<div class="abs" style="left:8px;top:728px;width:1084px;height:28px;background:#f0f0f0"></div>
<div class="abs" style="left:8px;top:753px;width:1084px;height:2px;background:#f7f3ea"></div>
<div class="abs" style="left:8px;top:755px;width:1084px;height:1px;background:#fbfbfb"></div>
<div class="abs" style="left:0;top:756px;width:1100px;height:2px;background:#4d8ccc"></div>
<div class="abs" style="left:6px;top:31px;width:2px;height:725px;background:#5189c2"></div>
<div class="abs" style="left:1092px;top:31px;width:2px;height:725px;background:#5189c2"></div>
<div class="abs" style="left:12px;top:737px;width:12px;height:11px;background:#3a6ea5"></div>
<div class="sep" style="left:26px;top:733px;height:20px"></div>
<div class="abs" style="left:30px;top:732px;width:150px;height:22px;background:#fff;border:1px solid #a9a9a9"></div>
<svg class="abs" style="left:0;top:725px" width="60" height="30"><circle cx="39.6" cy="15.2" r="3.1" fill="none" stroke="#333" stroke-width="1.3"/><path d="M37.2 17.8 L33.6 21.4" stroke="#333" stroke-width="2"/><rect x="40" y="22" width="1" height="1" fill="#000"/><rect x="42" y="22" width="1" height="1" fill="#000"/><rect x="44" y="22" width="1" height="1" fill="#000"/></svg>
<div class="abs" style="left:51px;top:737px;font-size:11px;line-height:13px;color:#6d6d6d;white-space:nowrap">Search for instrument</div>
<div class="sep" style="left:198px;top:733px;height:20px"></div>
<div class="abs" style="left:202px;top:735.5px;font-size:11.8px;font-weight:bold;line-height:15px;color:#000;white-space:nowrap">29 May 2014 19:00:00 EDT</div>
</body></html>
